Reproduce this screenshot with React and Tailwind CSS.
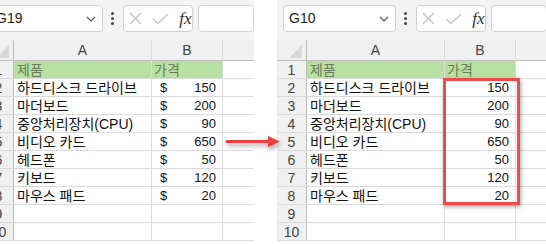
import React from 'react';

const rows = [
  { name: '제품', price: '가격', head: true },
  { name: '하드디스크 드라이브', price: '150' },
  { name: '마더보드', price: '200' },
  { name: '중앙처리장치(CPU)', price: '90' },
  { name: '비디오 카드', price: '650' },
  { name: '헤드폰', price: '50' },
  { name: '키보드', price: '120' },
  { name: '마우스 패드', price: '20' },
  { name: '', price: '' },
  { name: '', price: '' },
];

const cellFont = { fontFamily: '"Liberation Sans", "Noto Sans CJK KR", sans-serif' };

function Toolbar({ cellRef }) {
  return (
    <div className="flex items-center h-[40px] bg-[#f3f3f3] pl-[6px] pb-[3px]">
      <div className="flex items-center justify-between w-[119px] h-[27px] bg-white border border-[#d1d1d1] rounded-[4px] pl-[5px] pr-[6px]">
        <span className="text-[14px] text-[#222]" style={{ fontFamily: '"Liberation Sans", sans-serif' }}>{cellRef}</span>
        <svg width="10" height="6" viewBox="0 0 10 6" fill="none" stroke="#555" strokeWidth="1.2">
          <path d="M1 1 L5 5 L9 1" />
        </svg>
      </div>
      <div className="flex flex-col items-center gap-[2px] w-[22px]">
        <span className="w-[3px] h-[3px] rounded-full bg-[#444]"></span>
        <span className="w-[3px] h-[3px] rounded-full bg-[#444]"></span>
        <span className="w-[3px] h-[3px] rounded-full bg-[#444]"></span>
      </div>
      <div className="flex items-center w-[73px] h-[27px] bg-white border border-[#d1d1d1] rounded-[4px] pl-[5px] gap-[10px]">
        <svg width="13" height="13" viewBox="0 0 13 13" stroke="#bdbdbd" strokeWidth="1.1" fill="none">
          <path d="M1 1 L12 12 M12 1 L1 12" />
        </svg>
        <svg width="17" height="12" viewBox="0 0 17 12" stroke="#bdbdbd" strokeWidth="1.1" fill="none">
          <path d="M1 6 L6 10.5 L16 1" />
        </svg>
        <span className="text-[17px] italic text-[#333] leading-none" style={{ fontFamily: '"Liberation Serif", serif' }}>fx</span>
      </div>
      <div className="ml-[5px] w-[60px] h-[27px] bg-white border border-[#d1d1d1] rounded-[4px]"></div>
    </div>
  );
}

function Sheet({ cellRef, dollars, highlight }) {
  const cols = 'grid grid-cols-[30px_138px_71px_31px]';
  return (
    <div className="relative w-[270px] h-[244px] bg-white text-[#222]">
      <Toolbar cellRef={cellRef} />
      <div className={`${cols} h-[21px] bg-[#f0f0f0] border-b border-[#bcbcbc] text-[14px] text-[#444]`} style={cellFont}>
        <div className="relative border-r border-[#bcbcbc]">
          <div className="absolute right-[4px] bottom-[3px] w-0 h-0 border-l-[13px] border-l-transparent border-b-[13px] border-b-[#d8d8d8]"></div>
        </div>
        <div className="flex items-center justify-center border-r border-[#dadada]">A</div>
        <div className="flex items-center justify-center border-r border-[#dadada]">B</div>
        <div></div>
      </div>
      {rows.map((r, i) => (
        <div key={i} className={`${cols} h-[18px] border-b border-[#dadada] text-[13px] leading-none`} style={cellFont}>
          <div className="flex items-center justify-center bg-[#f0f0f0] border-r border-[#bcbcbc] text-[14px] text-[#444]">{i + 1}</div>
          <div className={`flex items-center pl-[3px] text-[14px] border-r border-[#dadada] ${r.head ? 'bg-[#b7e1a1] text-[#6b7c5c]' : 'text-[#111]'}`}>{r.name}</div>
          <div className={`flex items-center border-r border-[#dadada] ${r.head ? 'bg-[#b7e1a1] text-[#6b7c5c] text-[14px] pl-[2px]' : 'pl-[8px] pr-[6px] text-[#111]'}`}>
            {r.head ? r.price : (
              <>
                {dollars && r.price ? <span>$</span> : null}
                <span className="ml-auto">{r.price}</span>
              </>
            )}
          </div>
          <div></div>
        </div>
      ))}
      {highlight ? (
        <div className="absolute left-[166px] top-[78px] w-[77px] h-[127px] border-[3px] border-[#f24a4a] shadow-[1px_2px_4px_rgba(0,0,0,0.35)]"></div>
      ) : null}
    </div>
  );
}

export default function App() {
  return (
    <div className="relative flex w-[546px] h-[244px] bg-white overflow-hidden">
      <div className="w-[254px] h-[244px] overflow-hidden">
        <div className="ml-[-16px]">
          <Sheet cellRef="G19" dollars />
        </div>
      </div>
      <div className="ml-[23px] w-[269px] h-[244px] overflow-hidden">
        <Sheet cellRef="G10" highlight />
      </div>
      <svg className="absolute left-[224px] top-[133px] drop-shadow-[1px_3px_2px_rgba(0,0,0,0.35)]" width="62" height="18" viewBox="0 0 62 18">
        <path d="M3 8.5 L46 8.5" stroke="#ee4040" strokeWidth="3" strokeLinecap="round" />
        <path d="M44 3 L56 8.5 L44 14 Z" fill="#ee4040" />
      </svg>
    </div>
  );
}
